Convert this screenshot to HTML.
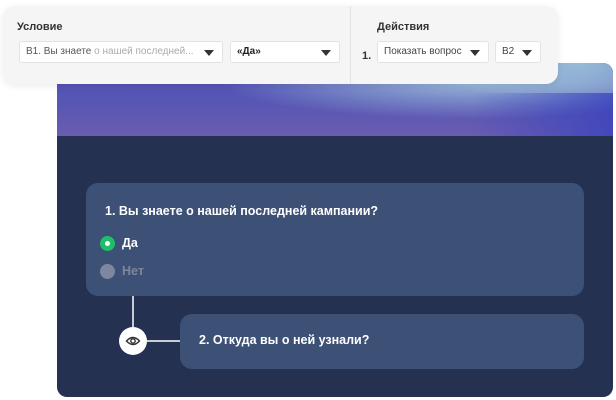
<!DOCTYPE html>
<html><head><meta charset="utf-8"><style>
*{margin:0;padding:0;box-sizing:border-box}
body{width:616px;height:400px;background:#fff;position:relative;overflow:hidden;font-family:"Liberation Sans","DejaVu Sans",sans-serif}
.card{position:absolute;left:57px;top:63px;width:556px;height:334px;border-radius:10px;background:#243150;overflow:hidden}
.banner{position:absolute;left:0;top:0;width:100%;height:73px;background:
radial-gradient(ellipse 260px 38px at 420px 18px,rgba(160,195,220,.95),rgba(160,195,220,0) 100%),
radial-gradient(ellipse 140px 45px at 520px 0px,rgba(150,190,215,.95),rgba(150,190,215,0)),
linear-gradient(180deg,#4f4fb2 0%,#5656b5 50%,#6a5cb0 100%)}
.banner:after{content:"";position:absolute;right:0;top:30px;width:140px;height:43px;background:linear-gradient(90deg,rgba(60,70,190,0),rgba(55,65,190,.75))}
.panel{position:absolute;left:3px;top:6px;width:555px;height:78px;background:#f5f5f6;border-radius:12px;box-shadow:0 2px 8px rgba(0,0,0,.08)}
.div{position:absolute;left:347px;top:0;width:1px;height:78px;background:#e2e2e6}
.lbl{position:absolute;font-size:11px;font-weight:bold;color:#333;top:15px}
.sel{position:absolute;top:35px;height:22px;background:#fff;border:1px solid #e3e3e6;border-radius:3px;font-size:10px;color:#444;line-height:20px;padding-left:6px}
.tri{position:absolute;right:8px;top:8px;width:0;height:0;border-left:5px solid transparent;border-right:5px solid transparent;border-top:6px solid #333}
.q{position:absolute;background:#3d5075;border-radius:12px;color:#fff;font-weight:bold;font-size:12.5px}
.line{position:absolute;background:#c8ccd6}
</style></head><body>
<div class="card"><div class="banner"></div></div>
<div class="panel">
<div class="lbl" style="left:14px">Условие</div>
<div class="sel" style="left:16px;width:204px"><span style="color:#555">B1. Вы знаете</span> <span style="color:#aaa">о нашей последней...</span><div class="tri"></div></div>
<div class="sel" style="left:227px;width:110px;font-weight:bold;color:#222">«Да»<div class="tri"></div></div>
<div class="div"></div>
<div class="lbl" style="left:374px">Действия</div>
<div style="position:absolute;left:359px;top:44px;font-size:11px;font-weight:bold;color:#333">1.</div>
<div class="sel" style="left:374px;width:112px">Показать вопрос<div class="tri"></div></div>
<div class="sel" style="left:492px;width:46px">B2<div class="tri"></div></div>
</div>
<div class="q" style="left:86px;top:183px;width:498px;height:113px">
<div style="position:absolute;left:19px;top:21px">1. Вы знаете о нашей последней кампании?</div>
<div style="position:absolute;left:14px;top:53px;width:15px;height:15px;border-radius:50%;background:#1fbf6a"><div style="position:absolute;left:5px;top:5px;width:5px;height:5px;border-radius:50%;background:#fff"></div></div>
<div style="position:absolute;left:36px;top:53px">Да</div>
<div style="position:absolute;left:14px;top:81px;width:15px;height:15px;border-radius:50%;background:#7e879e"></div>
<div style="position:absolute;left:36px;top:81px;color:#7e879e">Нет</div>
</div>
<div class="line" style="left:132px;top:296px;width:1.5px;height:33px"></div>
<div class="line" style="left:146px;top:340px;width:34px;height:1.5px"></div>
<div style="position:absolute;left:119px;top:327px;width:28px;height:28px;border-radius:50%;background:#fff">
<svg width="28" height="28" viewBox="0 0 28 28"><path d="M7.5 14 Q14 7 20.5 14 Q14 21 7.5 14Z" fill="none" stroke="#333" stroke-width="1.4"/><circle cx="14" cy="14" r="2.2" fill="none" stroke="#333" stroke-width="1.4"/></svg></div>
<div class="q" style="left:180px;top:314px;width:404px;height:55px">
<div style="position:absolute;left:19px;top:19px">2. Откуда вы о ней узнали?</div>
</div>
</body></html>
